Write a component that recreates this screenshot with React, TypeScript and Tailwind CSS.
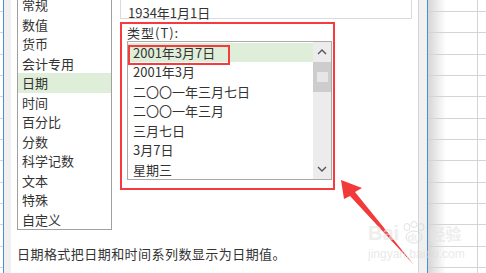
import React from 'react'

// 左侧分类列表
const categorias = ['常规', '数值', '货币', '会计专用', '日期', '时间', '百分比', '分数', '科学记数', '文本', '特殊', '自定义']

// 日期类型列表
const tipos = ['2001年3月7日', '2001年3月', '二〇〇一年三月七日', '二〇〇一年三月', '三月七日', '3月7日', '星期三']

function Planilha({ largura }: { largura: string }) {
    const linhas = Array.from({ length: 12 })
    return (
        <div className={`${largura} h-full flex flex-col`}>
            <div className="h-[12px] shrink-0 border-b border-[#d4d4d4]" />
            {linhas.map((_, i) => (
                <div key={i} className="h-[21.33px] shrink-0 border-b border-[#d4d4d4]" />
            ))}
        </div>
    )
}

function Chevron({ up }: { up?: boolean }) {
    return (
        <svg width="10" height="6" viewBox="0 0 10 6">
            <polyline
                points={up ? '1,5 5,1 9,5' : '1,1 5,5 9,1'}
                fill="none"
                stroke="#555"
                strokeWidth="1.4"
            />
        </svg>
    )
}

function App() {
    return (
        <div className="w-[486px] h-[273px] overflow-hidden relative flex bg-white text-[13px] text-[#333] font-['Noto_Sans_CJK_SC','Noto_Sans',sans-serif]">

            {/* planilha à esquerda */}
            <Planilha largura="w-[3px]" />
            <div className="w-px bg-[#4a8fd4]" />
            <div className="w-[7px] bg-[#f0f0f0]" />

            {/* conteúdo do diálogo */}
            <div className="w-[407px] bg-white flex flex-col">
                <div className="flex pl-[6px] mt-[-6px]">

                    <div className="w-[95px] border border-[#a0a0a0] flex flex-col">
                        {categorias.map((c) => (
                            <div
                                key={c}
                                className={`h-[19.5px] shrink-0 flex items-center pl-[4px] leading-none ${c === '日期' ? 'bg-[#dfeed8]' : ''}`}
                            >
                                {c}
                            </div>
                        ))}
                    </div>

                    <div className="ml-[8px] w-[292px] flex flex-col">
                        <div className="h-[25px] border border-[#dadada] flex items-center pl-[7px] pt-[11px] leading-none">
                            1934年1月1日
                        </div>

                        <div className="mt-[3px] w-[215px] h-[168px] border-2 border-[#f53b3b] flex flex-col pl-[5px]">
                            <div className="h-[16px] leading-[16px] tracking-[1px] mt-[1px]">类型(T):</div>
                            <div className="w-[205px] h-[139px] border border-[#a9a9a9] flex">
                                <div className="flex-1 flex flex-col pt-[0.5px]">
                                    {tipos.map((t, i) => (
                                        <div
                                            key={t}
                                            className={`relative h-[19.5px] shrink-0 flex items-center pl-[5px] leading-none ${i === 0 ? 'bg-[#dfeed8]' : ''}`}
                                        >
                                            {t}
                                            {i === 0 && (
                                                <div className="absolute left-0 top-[2px] w-[102px] h-[20px] border-2 border-[#f53b3b]" />
                                            )}
                                        </div>
                                    ))}
                                </div>
                                <div className="w-[18px] bg-[#ececec] flex flex-col">
                                    <div className="h-[20px] flex items-center justify-center">
                                        <Chevron up />
                                    </div>
                                    <div className="h-[30px] bg-[#cdcdcd] flex items-center justify-center">
                                        <div className="w-[11px] h-[10px] bg-[#e6e6e6]" />
                                    </div>
                                    <div className="flex-1" />
                                    <div className="h-[20px] flex items-center justify-center">
                                        <Chevron />
                                    </div>
                                </div>
                            </div>
                        </div>
                    </div>
                </div>

                <div className="mt-[14px] pl-[6px] h-[20px] leading-[20px] tracking-[0.45px]">
                    日期格式把日期和时间系列数显示为日期值。
                </div>
            </div>

            {/* borda direita do diálogo */}
            <div className="w-px bg-[#d4d4d4]" />
            <div className="w-[8px] bg-[#f0f0f0]" />
            <div className="w-px bg-[#4a8fd4]" />

            {/* planilha à direita */}
            <div className="flex-1 flex bg-[linear-gradient(to_right,#d6d6d6,#ffffff_18px)]">
                <div className="w-[50px] h-full border-r border-[#d4d4d4]">
                    <Planilha largura="w-full" />
                </div>
                <Planilha largura="flex-1" />
            </div>

            {/* seta vermelha */}
            <svg className="absolute left-0 top-0 pointer-events-none" width="486" height="273">
                <polygon
                    points="341,180 362,188 355,192 414,265 350,196 344,199"
                    fill="#f23a3a"
                />
            </svg>

            {/* marca d'água */}
            <div className="absolute left-[368px] top-[222px] flex flex-col items-start opacity-60 pointer-events-none">
                <div className="flex items-center gap-[1px] font-['Liberation_Sans',sans-serif] font-bold text-[20px] leading-[22px] text-[#e4e4e4]">
                    <span>Bai</span>
                    <span className="relative flex items-center justify-center w-[28px] h-[22px]">
                        <svg className="absolute" width="28" height="24" viewBox="0 0 28 24">
                            <ellipse cx="14" cy="16" rx="8" ry="6" fill="none" stroke="#d0d0d0" />
                            <ellipse cx="7" cy="6" rx="3" ry="3.5" fill="none" stroke="#d0d0d0" />
                            <ellipse cx="14" cy="3.5" rx="3" ry="3" fill="none" stroke="#d0d0d0" />
                            <ellipse cx="21" cy="6" rx="3" ry="3.5" fill="none" stroke="#d0d0d0" />
                        </svg>
                        <span className="relative text-[11px] leading-none mt-[8px]">du</span>
                    </span>
                    <span className="text-[16px] font-['Noto_Sans_CJK_SC',sans-serif]">经验</span>
                </div>
                <div className="font-['Liberation_Sans',sans-serif] text-[12px] leading-[14px] mt-[3px] text-[#dcdcdc]">
                    jingyan.baidu.com
                </div>
            </div>
        </div>
    )
}

export default App
